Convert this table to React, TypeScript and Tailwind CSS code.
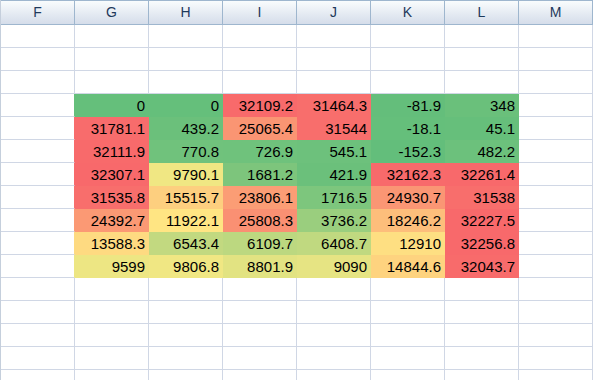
import React from "react";

const COLUMNS = ["F", "G", "H", "I", "J", "K", "L", "M"];

const DATA: number[][] = [
  [0, 0, 32109.2, 31464.3, -81.9, 348],
  [31781.1, 439.2, 25065.4, 31544, -18.1, 45.1],
  [32111.9, 770.8, 726.9, 545.1, -152.3, 482.2],
  [32307.1, 9790.1, 1681.2, 421.9, 32162.3, 32261.4],
  [31535.8, 15515.7, 23806.1, 1716.5, 24930.7, 31538],
  [24392.7, 11922.1, 25808.3, 3736.2, 18246.2, 32227.5],
  [13588.3, 6543.4, 6109.7, 6408.7, 12910, 32256.8],
  [9599, 9806.8, 8801.9, 9090, 14844.6, 32043.7],
];

const EMPTY_BEFORE = 3;
const EMPTY_AFTER = 5;

const GREEN = [99, 190, 123];
const YELLOW = [255, 235, 132];
const RED = [248, 105, 107];

// 3-colour scale: lowest green, 50th percentile yellow, highest red
function buildScale(values: number[]) {
  const sorted = [...values].sort((a, b) => a - b);
  const min = sorted[0];
  const max = sorted[sorted.length - 1];
  const rank = 0.5 * (sorted.length - 1);
  const lo = Math.floor(rank);
  const mid = sorted[lo] + (rank - lo) * (sorted[lo + 1] - sorted[lo]);

  const mix = (a: number[], b: number[], t: number) =>
    `rgb(${a.map((v, i) => Math.round(v + (b[i] - v) * t)).join(",")})`;

  return (value: number) => {
    if (value <= mid) return mix(GREEN, YELLOW, (value - min) / (mid - min));
    return mix(YELLOW, RED, (value - mid) / (max - mid));
  };
}

const colorFor = buildScale(DATA.flat());

function HeaderCell({ label }: { label: string }) {
  return (
    <div className="flex h-[25px] w-[74px] shrink-0 items-center justify-center border-y border-r border-[#9eb6ce] bg-gradient-to-b from-[#f9fcfd] to-[#d5ddea] text-[14px] text-[#1e395b]">
      {label}
    </div>
  );
}

function EmptyRow() {
  return (
    <div className="flex">
      {COLUMNS.map((col) => (
        <div key={col} className="h-[23px] w-[74px] shrink-0 border-b border-r border-[#d0d7e5]" />
      ))}
    </div>
  );
}

function DataRow({ values }: { values: number[] }) {
  return (
    <div className="flex">
      <div
        className="h-[23px] w-[74px] shrink-0 border-b border-r border-[#d0d7e5]"
        style={{ borderRightColor: colorFor(values[0]) }}
      />
      {values.map((value, i) => {
        const bg = colorFor(value);
        return (
          <div
            key={i}
            className="h-[23px] w-[74px] shrink-0 border-b border-r pr-[3px] pt-px text-right text-[15px] leading-[22px] text-black"
            style={{ backgroundColor: bg, borderColor: bg }}
          >
            {value}
          </div>
        );
      })}
      <div className="h-[23px] w-[74px] shrink-0 border-b border-r border-[#d0d7e5]" />
    </div>
  );
}

export default function App() {
  return (
    <div className="h-[380px] w-[594px] overflow-hidden bg-white font-['Liberation_Sans',Arial,sans-serif]">
      <div className="w-max border-l border-[#c5cfdc]">
        <div className="flex">
          {COLUMNS.map((col) => (
            <HeaderCell key={col} label={col} />
          ))}
        </div>
        {Array.from({ length: EMPTY_BEFORE }).map((_, i) => (
          <EmptyRow key={`b${i}`} />
        ))}
        {DATA.map((row, i) => (
          <DataRow key={i} values={row} />
        ))}
        {Array.from({ length: EMPTY_AFTER }).map((_, i) => (
          <EmptyRow key={`a${i}`} />
        ))}
      </div>
    </div>
  );
}
